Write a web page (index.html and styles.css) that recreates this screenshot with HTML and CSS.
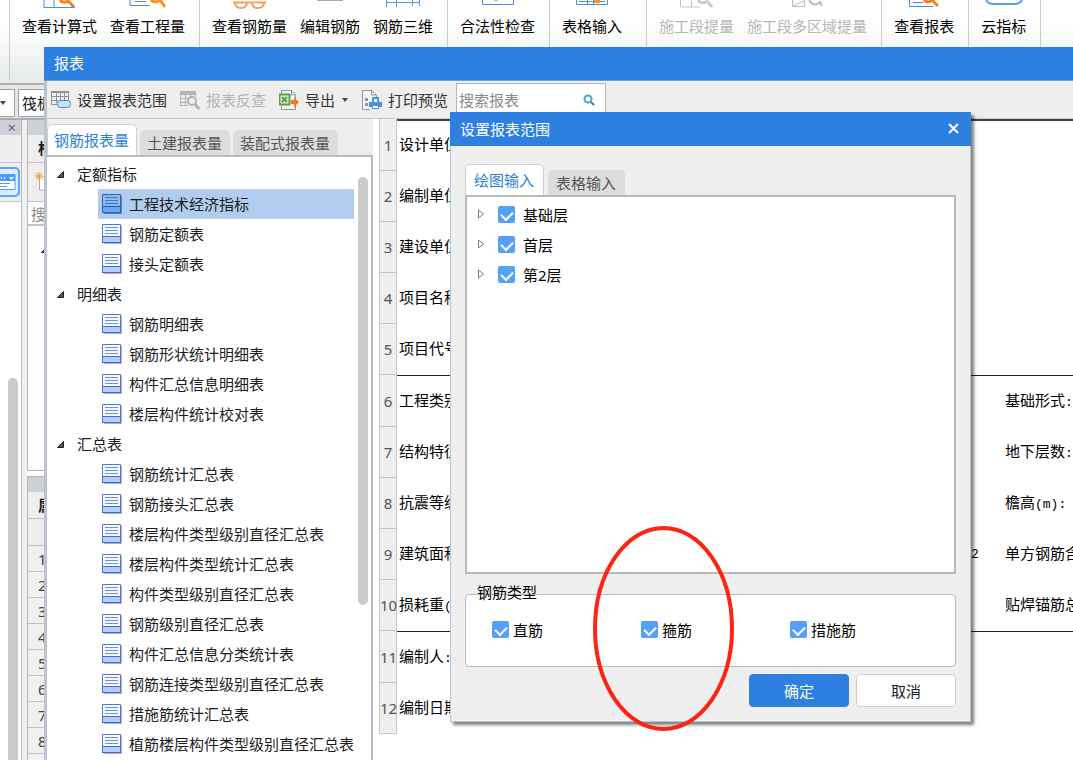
FILE: index.html
```html
<!DOCTYPE html>
<html lang="zh-CN">
<head>
<meta charset="utf-8">
<title>报表</title>
<link rel="stylesheet" href="styles.css">
</head>
<body>
<svg class="defs" aria-hidden="true">
  <symbol id="doc" viewBox="0 0 20 20">
    <path d="M2 2h18v18H2z" fill="#8f9299" opacity=".7"/>
    <path d="M.5.5h18v18H.5z" fill="#f4f8ff" stroke="#5577cc"/>
    <path d="M1 13h17v5H1z" fill="#b3ccff"/>
    <path d="M1 12.5h17" stroke="#4a6cc8"/>
    <path d="M0 18.5h19" stroke="#4166c4"/>
    <path d="M3 3.500h13M3 6.500h13M3 9.500h13" stroke="#7390dc"/>
  </symbol>
  <symbol id="doc-on" viewBox="0 0 20 20">
    <path d="M2 2h18v18H2z" fill="#667fa8"/>
    <path d="M.5.5h18v18H.5z" fill="#8dbbf0" stroke="#2d62b5"/>
    <path d="M1 13h17v5H1z" fill="#68a8f4"/>
    <path d="M1 12.5h17" stroke="#2458b0"/>
    <path d="M3 3.500h13M3 6.500h13M3 9.500h13" stroke="#3c73c6"/>
  </symbol>
  <symbol id="open" viewBox="0 0 9 9"><path d="M7.500 1.500v6H1.500z" fill="#555" stroke="#222"/></symbol>
  <symbol id="closed" viewBox="0 0 8 10"><path d="M1.500 1l5 4-5 4z" fill="#fff" stroke="#808080"/></symbol>
</svg>
<div class="app">
  <nav class="ribbon">
    <div class="group">
      <button class="cmd"><svg viewBox="0 0 34 9"><path d="M1 0v7.500H32M11 0v7" stroke="#4a90e2" fill="none"/><path d="M17 0q3 4 8 1l6 6" stroke="#f58220" stroke-width="3" fill="none"/></svg>查看计算式</button>
      <button class="cmd"><svg viewBox="0 0 38 9"><path d="M1 0v5.500H21" stroke="#4a90e2" fill="none"/><path d="M6 1.500h11" stroke="#888"/><path d="M22 0q4 4 9 0l5 7" stroke="#f7941d" stroke-width="3" fill="none"/></svg>查看工程量</button>
    </div>
    <div class="group">
      <button class="cmd"><svg viewBox="0 0 36 9"><path d="M1 2.500h33M3 2q0 6 6 6t6-6M20 2q0 6 6 6t6-6" stroke="#f7a15f" stroke-width="2" fill="none"/></svg>查看钢筋量</button>
      <button class="cmd"><svg viewBox="0 0 28 9"><path d="M1 .5h26" stroke="#a9adb5"/></svg>编辑钢筋</button>
      <button class="cmd"><svg viewBox="0 0 36 9"><path d="M1.500 7V0M11.500 7V0M27.500 6V0M34.500 6V0M1 2.500h33" stroke="#5c94d8" fill="none"/></svg>钢筋三维</button>
    </div>
    <div class="group">
      <button class="cmd"><svg viewBox="0 0 32 9"><path d="M.5 0v4.500h31V0" stroke="#4a90e2" fill="none"/><path d="M12 0l2 1 2-1" stroke="#7fc65c" fill="none"/></svg>合法性检查</button>
    </div>
    <div class="group wide">
      <button class="cmd"><svg viewBox="0 0 32 9"><path d="M.5 0v4.500h31V0M11.500 0v4M17.500 0v4M3 1.500h26" stroke="#4a90e2" fill="none"/><path d="M18 0h6v3h-6z" fill="#f7941d"/></svg>表格输入</button>
    </div>
    <div class="group">
      <button class="cmd" disabled><svg viewBox="0 0 34 9"><path d="M.5 0v7h20M11.500 0v7" stroke="#c4c4c4" fill="none"/><path d="M18 0q4 5 9 1l5 6" stroke="#ccc" stroke-width="3" fill="none"/></svg>施工段提量</button>
      <button class="cmd" disabled><svg viewBox="0 0 32 9"><path d="M1.500 0v6.500h12V0M2 6l11-5" stroke="#bbb" fill="none"/><path d="M18 0q5 8 11 2l2 4" stroke="#bbb" stroke-width="2" fill="none"/></svg>施工段多区域提量</button>
    </div>
    <div class="group">
      <button class="cmd"><svg viewBox="0 0 32 9"><path d="M1.500 0v6.500h24M5 2.500h10" stroke="#4a90e2" fill="none"/><path d="M16 0q4 4 8 0l6 6" stroke="#f58220" stroke-width="3" fill="none"/></svg>查看报表</button>
    </div>
    <div class="group last">
      <button class="cmd"><svg viewBox="0 0 40 9"><path d="M2 0q2 4 8 4h20q6 0 8-4" stroke="#5a9ff0" stroke-width="2" fill="none"/></svg>云指标</button>
    </div>
  </nav>
  <div class="combos">
    <button class="combo-end" aria-label="展开"><i class="caret"></i></button>
    <button class="combo">筏板基础</button>
  </div>
  <div class="back">
    <aside class="nav-pane">
      <div class="pane-head"><button class="x" aria-label="关闭面板">×</button></div>
      <div class="pane-band"></div>
      <div class="pane-tool"><button class="mode" aria-label="视图"><svg width="18" height="16" viewBox="0 0 18 16"><path d="M0 .5h15v15H0" fill="#fff" stroke="#4a9cf5"/><path d="M0 1h15v6H0z" fill="#4a9cf5"/><path d="M1.500 3v2M4.500 3v2" stroke="#fff"/><path d="M9 3h5l-2.500 3z" fill="#fff"/><path d="M0 9.500h10M0 12.500h7" stroke="#4a9cf5"/></svg></button></div>
      <div class="nav-body"><div class="thumb"></div></div>
    </aside>
    <section class="mid-pane">
      <div class="list-pane">
        <div class="pane-head"></div>
        <div class="pane-band strong">构件列表</div>
        <div class="pane-tool icon-left"><svg width="20" height="20" viewBox="0 0 20 20"><path d="M4.500 5v13H20M8 4.500h12" stroke="#a5acb4" fill="#fff"/><path d="M1 1l6 6M7 1L1 7M4 0v8M0 4h8" stroke="#f7941d"/></svg></div>
        <div class="find">搜索构件</div>
        <div class="list-body"><svg width="9" height="9"><use href="#open"/></svg></div>
      </div>
      <div class="prop-pane">
        <div class="pane-head"></div>
        <div class="pane-band strong">属性</div>
        <div class="pane-band"></div>
        <ol class="props"><li>1</li><li>2</li><li>3</li><li>4</li><li>5</li><li>6</li><li>7</li><li>8</li><li></li></ol>
      </div>
    </section>
  </div>

  <main class="window">
    <h1 class="title">报表</h1>
    <div class="tools">
      <button class="tool"><svg width="20" height="20" viewBox="0 0 20 20"><path d="M0 1h18v2H0z" fill="#8b939d"/><path d="M.5 1v13.500H6M5.500 3v10M9.500 3v8M13.500 3v7M17.500 3v7M0 6.500h18M0 10.500h7" stroke="#8b939d" fill="none"/><rect x="6.500" y="10.500" width="13" height="7" rx="3" fill="#c8e0f8" stroke="#4a88d0"/></svg>设置报表范围</button>
      <button class="tool" disabled><svg width="20" height="20" viewBox="0 0 20 20"><path d="M0 1h16v4H0z" fill="#b4b4b4"/><path d="M.5 1v14.500H8M5.500 4v11M10.500 4v4M15.500 4v3M0 8.500h8M0 12.500h7" stroke="#b4b4b4" fill="none"/><circle cx="12" cy="11" r="4" fill="#eee" stroke="#b4b4b4" stroke-width="2"/><path d="M15 14l4 5" stroke="#b4b4b4" stroke-width="3"/></svg>报表反查</button>
      <button class="tool"><svg width="20" height="20" viewBox="0 0 20 20"><path d="M2.500 4V.5h10l4 4V19.500h-14V15M12.500 0v5h4" fill="#f5f5f5" stroke="#8b98a5"/><path d="M.5 4.500h10v10H.5z" fill="#e4f2dc" stroke="#5f9e43" stroke-width="2"/><path d="M3 7l5 5M8 7l-5 5" stroke="#5f9e43" stroke-width="2"/><path d="M12 10h3V7l5 5-5 5v-3h-3z" fill="#f47a20"/></svg>导出<i class="caret"></i></button>
      <button class="tool"><svg width="20" height="20" viewBox="0 0 20 20"><path d="M8 19.500H.5V.5h9l5 5V9M9.500 0v5h5" fill="#f5f5f5" stroke="#8b98a5"/><path d="M3 8h3v3H3zM3 13h3v3H3z" fill="#8b98a5"/><path d="M10 7h7v5h3v5h-3v2h-7v-2H7v-5h3z" fill="#4f91dd"/><path d="M12 9h3v3h-3zM11 16h5v2h-5z" fill="#fff"/></svg>打印预览</button>
      <div class="search"><input type="text" placeholder="搜索报表" aria-label="搜索报表"><svg width="12" height="12" viewBox="0 0 12 12"><circle cx="5" cy="5" r="3.500" fill="none" stroke="#4ba3d3" stroke-width="2"/><path d="M8 8l3 3" stroke="#2c7cb8" stroke-width="2"/></svg></div>
    </div>
    <div class="body">
      <aside class="side">
        <div class="tabs"><button class="tab on">钢筋报表量</button><button class="tab">土建报表量</button><button class="tab">装配式报表量</button></div>
        <div class="tree">
          <ul class="nodes">
            <li><button class="node"><svg><use href="#open"/></svg>定额指标</button>
              <ul>
                <li><button class="leaf sel"><svg><use href="#doc-on"/></svg>工程技术经济指标</button></li>
                <li><button class="leaf"><svg><use href="#doc"/></svg>钢筋定额表</button></li>
                <li><button class="leaf"><svg><use href="#doc"/></svg>接头定额表</button></li>
              </ul></li>
            <li><button class="node"><svg><use href="#open"/></svg>明细表</button>
              <ul>
                <li><button class="leaf"><svg><use href="#doc"/></svg>钢筋明细表</button></li>
                <li><button class="leaf"><svg><use href="#doc"/></svg>钢筋形状统计明细表</button></li>
                <li><button class="leaf"><svg><use href="#doc"/></svg>构件汇总信息明细表</button></li>
                <li><button class="leaf"><svg><use href="#doc"/></svg>楼层构件统计校对表</button></li>
              </ul></li>
            <li><button class="node"><svg><use href="#open"/></svg>汇总表</button>
              <ul>
                <li><button class="leaf"><svg><use href="#doc"/></svg>钢筋统计汇总表</button></li>
                <li><button class="leaf"><svg><use href="#doc"/></svg>钢筋接头汇总表</button></li>
                <li><button class="leaf"><svg><use href="#doc"/></svg>楼层构件类型级别直径汇总表</button></li>
                <li><button class="leaf"><svg><use href="#doc"/></svg>楼层构件类型统计汇总表</button></li>
                <li><button class="leaf"><svg><use href="#doc"/></svg>构件类型级别直径汇总表</button></li>
                <li><button class="leaf"><svg><use href="#doc"/></svg>钢筋级别直径汇总表</button></li>
                <li><button class="leaf"><svg><use href="#doc"/></svg>构件汇总信息分类统计表</button></li>
                <li><button class="leaf"><svg><use href="#doc"/></svg>钢筋连接类型级别直径汇总表</button></li>
                <li><button class="leaf"><svg><use href="#doc"/></svg>措施筋统计汇总表</button></li>
                <li><button class="leaf"><svg><use href="#doc"/></svg>植筋楼层构件类型级别直径汇总表</button></li>
              </ul></li>
          </ul>
          <div class="rail"><div class="thumb"></div></div>
        </div>
      </aside>
      <div class="paper">
      <table class="sheet">
        <tbody>
        <tr class="rule"><th scope="row">1</th><td>设计单位:</td><td></td><td></td></tr>
        <tr><th scope="row">2</th><td>编制单位:</td><td></td><td></td></tr>
        <tr><th scope="row">3</th><td>建设单位:</td><td></td><td></td></tr>
        <tr><th scope="row">4</th><td>项目名称:</td><td></td><td></td></tr>
        <tr><th scope="row">5</th><td>项目代号:</td><td></td><td></td></tr>
        <tr class="rule"><th scope="row">6</th><td>工程类别:</td><td></td><td>基础形式<span class="half">:</span></td></tr>
        <tr><th scope="row">7</th><td>结构特征:</td><td></td><td>地下层数<span class="half">:</span></td></tr>
        <tr><th scope="row">8</th><td>抗震等级:</td><td></td><td>檐高<span class="half">(m):</span></td></tr>
        <tr><th scope="row">9</th><td>建筑面积:</td><td><span class="half">2</span></td><td>单方钢筋含量</td></tr>
        <tr><th scope="row">10</th><td>损耗重<span class="half">(</span></td><td></td><td>贴焊锚筋总重</td></tr>
        <tr class="rule"><th scope="row">11</th><td>编制人<span class="half">:</span></td><td></td><td></td></tr>
        <tr><th scope="row">12</th><td>编制日期:</td><td></td><td></td></tr>
        </tbody>
      </table>
      </div>
    </div>
  </main>

  <section class="dialog" role="dialog" aria-labelledby="dlg">
    <header class="dlg-title"><h2 id="dlg">设置报表范围</h2><button class="close" aria-label="关闭"><svg width="11" height="11" viewBox="0 0 11 11"><path d="M1 1l9 9M10 1l-9 9" stroke="#fff" stroke-width="2"/></svg></button></header>
    <div class="dlg-body">
      <div class="tabs"><button class="tab on">绘图输入</button><button class="tab">表格输入</button></div>
      <div class="floors">
        <div class="floor"><svg width="8" height="10"><use href="#closed"/></svg><label><input type="checkbox" checked>基础层</label></div>
        <div class="floor"><svg width="8" height="10"><use href="#closed"/></svg><label><input type="checkbox" checked>首层</label></div>
        <div class="floor"><svg width="8" height="10"><use href="#closed"/></svg><label><input type="checkbox" checked>第2层</label></div>
      </div>
      <fieldset class="kinds">
        <legend>钢筋类型</legend>
        <div class="kind-row">
          <label><input type="checkbox" checked>直筋</label>
          <label><input type="checkbox" checked>箍筋</label>
          <label><input type="checkbox" checked>措施筋</label>
        </div>
      </fieldset>
      <div class="actions"><button class="btn primary">确定</button><button class="btn">取消</button></div>
    </div>
  </section>
  <svg class="ring" viewBox="0 0 141 205" aria-hidden="true"><ellipse cx="70.500" cy="102.500" rx="68.500" ry="100.500" fill="none" stroke="#ff2412" stroke-width="4"/></svg>
</div>
</body>
</html>
```
FILE: styles.css
```css
* { box-sizing: border-box; }
body, button, input { font-family: "Noto Sans", "Noto Sans CJK SC", sans-serif; font-size: 15px; }
body { margin: 0; color: #1c1c1c; }
button { border: 0; padding: 0; background: none; color: inherit; line-height: 20px; white-space: nowrap; }
h1, h2, ul, ol { margin: 0; padding: 0; list-style: none; font-weight: 400; font-size: 15px; }
.defs { position: absolute; width: 0; height: 0; }
.app { position: relative; height: 100vh; overflow: hidden; display: flex; flex-direction: column; background: #f0f0f0; }
.caret { width: 0; height: 0; border: 3px solid transparent; border-top: 4px solid #444; border-bottom: 0; }

/* ribbon */
.ribbon { flex: none; display: flex; height: 85px; padding-left: 9px; background: linear-gradient(#fff 30%, #e6eaea); border-bottom: 2px solid #b2b2b2; }
.group { display: flex; align-items: flex-start; gap: 13px; height: 81px; padding: 0 14px 0 12px; border-left: 1px solid #ccc; }
.wide { min-width: 97px; }
.last { border-right: 1px solid #ccc; }
.cmd { display: flex; flex-direction: column; align-items: center; gap: 7px; color: #000; }
.cmd svg { height: 9px; width: auto; }
.cmd:disabled { color: #b6b6b6; }

/* panes behind the report window */
.combos { flex: none; display: flex; gap: 3px; height: 35px; padding: 4px 0; border-bottom: 2px solid #a9abae; background: #e6e6e6; }
.combo, .combo-end { background: #fff; border: 1px solid #a0a0a0; display: flex; align-items: center; height: 28px; }
.combo-end { width: 15px; border-left: 0; }
.combo { padding: 0 3px; width: 120px; }
.back { flex: 1; display: flex; gap: 5px; min-height: 0; }
.nav-pane { width: 22px; display: flex; flex-direction: column; border-right: 1px solid #bbb; }
.pane-head { flex: none; height: 15px; background: #cfd1d8; display: flex; justify-content: flex-end; padding-right: 5px; }
.x { line-height: 15px; color: #666; }
.pane-band { flex: none; height: 28px; border-bottom: 1px solid #c2c2c2; background: #eee; padding-left: 10px; line-height: 27px; }
.strong { font-weight: 700; white-space: nowrap; overflow: hidden; }
.pane-tool { flex: none; height: 39px; background: #eee; border-bottom: 1px solid #c2c2c2; display: flex; align-items: center; }
.icon-left { padding-left: 7px; }
.mode { width: 20px; height: 30px; border: 2px solid #5aa5f5; border-left: 0; border-radius: 0 5px 5px 0; background: #dcecfc; display: flex; align-items: center; }
.nav-body { flex: 1; background: #fff; padding: 176px 0 0 8px; display: flex; }
.thumb { width: 10px; background: #cbcbcb; border-radius: 5px 5px 0 0; }
.mid-pane { flex: 1; display: flex; flex-direction: column; gap: 5px; background: #fff; }
.list-pane { flex: none; border: 1px solid #b6b6b6; border-top: 0; }
.find { height: 24px; line-height: 24px; padding-left: 3px; color: #888; background: #fff; border-bottom: 2px solid #c2c2c2; }
.list-body { height: 244px; padding: 12px; background: #fff; }
.prop-pane { border: 1px solid #b6b6b6; }
.prop-pane .pane-band { height: 27px; }
.props li { height: 26px; line-height: 26px; padding-left: 10px; color: #444; border-bottom: 1px solid #c2c2c2; background: #f0f0f0; }

/* report window */
.window { position: absolute; top: 47px; left: 44px; right: 0; bottom: 0; display: flex; flex-direction: column; background: #fff; border-left: 3px solid #bbc3cf; }
.title { flex: none; height: 34px; margin-left: -3px; padding-left: 10px; line-height: 33px; color: #fff; background: #2d7fe0; border-bottom: 1px solid #6d9ddb; }
.tools { flex: none; display: flex; align-items: center; height: 38px; padding-left: 4px; gap: 13px; background: #eee; border-bottom: 1px solid #c4c8ca; }
.tool { display: flex; align-items: center; gap: 6px; color: #333; }
.tool .caret { margin: 0 1px; }
.tool:disabled { color: #b4b4b4; }
.search { display: flex; align-items: center; align-self: flex-end; width: 150px; height: 35px; margin-left: -5px; padding: 0 10px 2px 2px; background: #fff; border: 1px solid #b5b5b5; }
.search input { flex: 1; min-width: 0; border: 0; padding: 0; outline: 0; }
.search input::placeholder { color: #888; }
.body { flex: 1; display: flex; min-height: 0; }
.side { flex: none; width: 326px; display: flex; flex-direction: column; background: #eee; }
.tabs { flex: none; display: flex; align-items: flex-end; gap: 4px; }
.tab { height: 25px; padding: 0 8px; border-radius: 5px 5px 0 0; background: #ddd; color: #555; }
.tab.on { height: 31px; padding: 0 7px; background: #fff; color: #2d7fe0; border: 1px solid #d0d0d0; border-bottom: 0; }
.side .tabs { height: 36px; gap: 3px; }
.side .tab { padding: 0 8px 0 7px; }
.side .tab.on { padding: 0 7px 0 6px; }
.tree { flex: 1; min-height: 0; display: flex; overflow: hidden; background: #fff; border: solid #b9bcbe; border-width: 2px 2px 0 0; padding: 2px 5px 0 0; }
.nodes { flex: 1; padding-right: 4px; }
.node, .leaf { display: flex; align-items: center; height: 30px; width: 100%; }
.node { padding-left: 9px; gap: 12px; }
.node svg { width: 9px; height: 9px; }
.nodes ul { padding-left: 51px; }
.leaf { padding-left: 4px; gap: 7px; }
.leaf svg { width: 20px; height: 20px; flex: none; }
.sel { background: #b1ccee; }
.rail { padding: 18px 0 0; }
.rail .thumb { height: 428px; border-radius: 5px; }
.paper { flex: 1; min-width: 0; overflow: hidden; padding-left: 6px; }
.sheet { width: 720px; table-layout: fixed; border-collapse: separate; border-spacing: 0; color: #000; }
.sheet th, .sheet td { height: 51px; padding: 0; white-space: nowrap; overflow: hidden; text-align: left; font-weight: 400; }
.sheet td { padding: 0 0 5px 2px; }
.sheet th { width: 18px; background: #eee; color: #555; text-align: center; border: 1px solid #c6c6c6; border-top: 0; overflow: visible; }
.sheet td:nth-child(2) { width: 572px; }
.sheet td:nth-child(3) { width: 34px; }
.sheet .rule th, .sheet .rule td { height: 52px; }
.sheet .rule td { border-top: 1px solid #222; }
.sheet .rule:first-child td { border-top: 2px solid #444; }
.half { font-family: "Liberation Mono", monospace; font-size: 13px; }

/* range dialog */
.dialog { position: absolute; top: 112px; left: 450px; width: 521px; background: #efefef; border: 1px solid #b6c6dc; border-top: 0; box-shadow: 3px 3px 3px rgba(0, 0, 0, .5); }
.dlg-title { display: flex; align-items: center; justify-content: space-between; height: 34px; margin: 0 -1px; padding: 0 12px 2px 10px; background: #2d7fe0; color: #fff; }
.close { display: flex; }
.dlg-body { padding: 18px 14px 14px; }
.dialog .tab { padding: 0 9px 0 8px; }
.floors { height: 379px; padding: 2px 10px; background: #fff; border: 2px solid #b9b9b9; }
.floor { display: flex; align-items: center; gap: 13px; height: 30px; }
.floor label { display: flex; align-items: center; gap: 8px; color: #000; }
.dialog input { appearance: none; flex: none; width: 17px; height: 17px; margin: 0; border-radius: 2px; background: #55a0fb; display: flex; justify-content: center; }
.dialog input:checked::before { content: ""; width: 6px; height: 9px; margin-top: 3px; border: solid #fff; border-width: 0 2px 2px 0; transform: rotate(45deg); }
.kinds { position: relative; display: flex; flex-direction: column; height: 85px; margin: 8px 0 7px; padding: 0; border: 0; }
.kinds legend { position: absolute; top: 0; left: 12px; padding: 0; line-height: 20px; color: #000; }
.kind-row { flex: 1; display: grid; grid-template-columns: 149px 149px 1fr; align-items: center; margin-top: 12px; padding: 0 0 3px 26px; background: #fff; border: 1px solid #bbb; border-radius: 4px; }
.kind-row label { display: flex; align-items: center; gap: 4px; color: #000; }
.actions { display: flex; justify-content: flex-end; gap: 7px; }
.btn { width: 100px; height: 33px; border: 1px solid #d0d0d0; border-radius: 4px; background: #fff; }
.primary { background: #2d7fe0; border-color: #2d7fe0; color: #fff; }
.ring { position: absolute; left: 593px; top: 526px; width: 141px; height: 205px; pointer-events: none; }
```
